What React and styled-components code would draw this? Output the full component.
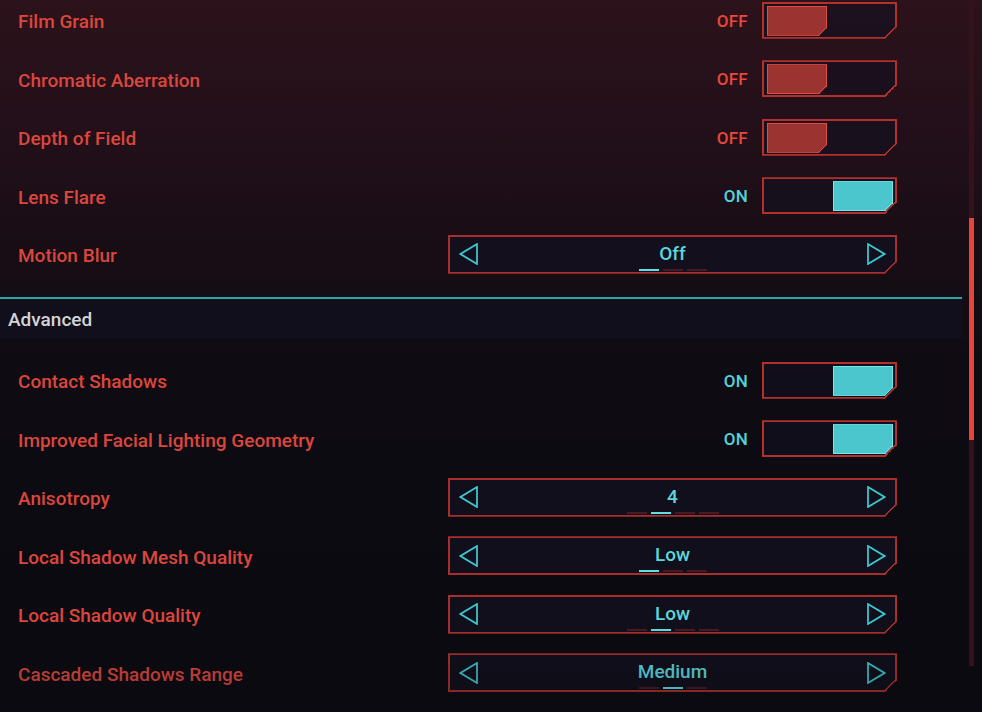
import React from "react";
import styled, { createGlobalStyle, css } from "styled-components";

const GlobalStyle = createGlobalStyle`
  *, *::before, *::after { box-sizing: border-box; }
  html, body { margin: 0; height: 100%; }
  body {
    background: linear-gradient(180deg, #2c121a 0%, #24101a 16%, #170d15 36%, #0e0b13 54%, #0a0a10 100%);
    font-family: Roboto, "Noto Sans", sans-serif;
    overflow: hidden;
  }
`;

// frame with a cut bottom-right corner; the diagonal edge is painted by ::after
const chamfer = (cut, color, width) => css`
  position: relative;
  border: ${width}px solid ${color};
  clip-path: polygon(0 0, 100% 0, 100% calc(100% - ${cut}px), calc(100% - ${cut}px) 100%, 0 100%);
  &::after {
    content: "";
    position: absolute;
    right: -${width}px;
    bottom: -${width}px;
    width: ${cut}px;
    height: ${cut}px;
    background: linear-gradient(
      to bottom right,
      transparent calc(50% - ${width}px),
      ${color} calc(50% - ${width}px),
      ${color} 50%,
      transparent 50%
    );
  }
`;

const Screen = styled.div`
  display: flex;
  height: 712px;
  overflow: hidden;
`;

const Panel = styled.div`
  position: relative;
  flex: 0 0 962px;
  display: flex;
  flex-direction: column;
  margin-top: -9px;
  &::after {
    content: "";
    position: absolute;
    left: 0;
    right: 0;
    top: 630px;
    height: 91px;
    pointer-events: none;
    background: linear-gradient(180deg, rgba(10, 10, 16, 0) 0%, rgba(10, 10, 16, 0.28) 100%);
  }
`;

const Row = styled.div`
  height: 58.5px;
  flex: none;
  display: flex;
  align-items: center;
  justify-content: space-between;
  padding: 0 65px 0 18px;
`;

const Label = styled.span`
  margin-top: 3px;
  font-size: 19px;
  font-weight: 500;
  color: #dc463c;
`;

const SectionHead = styled.div`
  flex: none;
  margin: 13.5px 0 12px;
  height: 42px;
  border-top: 2px solid #2fa3a6;
  background: #100f1b;
  display: flex;
  align-items: center;
  padding: 1px 0 0 8px;
  font-size: 19px;
  font-weight: 500;
  color: #d4d4d6;
`;

const ToggleGroup = styled.div`
  display: flex;
  align-items: center;
  gap: 14px;
`;

const State = styled.span`
  margin-top: 1px;
  font-size: 17px;
  font-weight: 500;
  letter-spacing: 0.3px;
  color: ${(p) => (p.$on ? "#55d2d8" : "#ea473d")};
`;

const Toggle = styled.div`
  ${chamfer(12, "#b3302d", 2)}
  width: 135px;
  height: 37px;
  padding: 2px 2px 1px 3px;
  display: flex;
  justify-content: ${(p) => (p.$on ? "flex-end" : "flex-start")};
  background: rgba(18, 16, 32, 0.6);
`;

const Knob = styled.div`
  ${(p) => (p.$on ? chamfer(8, "#70e8ee", 1) : chamfer(8, "#e24b3f", 1))}
  width: 60px;
  height: 100%;
  background: ${(p) => (p.$on ? "#4ac6cc" : "#9b3430")};
`;

const Selector = styled.div`
  ${chamfer(12, "#a92f2c", 2)}
  width: 449px;
  height: 39px;
  display: flex;
  align-items: center;
  padding: 0 9px;
  background: rgba(18, 17, 32, 0.7);
`;

const Value = styled.div`
  flex: 1;
  align-self: stretch;
  display: flex;
  flex-direction: column;
  align-items: center;
  padding-top: 7px;
`;

const ValueText = styled.span`
  font-size: 19px;
  font-weight: 500;
  line-height: 20px;
  color: #5cd6dc;
`;

const Dashes = styled.div`
  display: flex;
  gap: 4px;
  margin-top: 5px;
`;

const Dash = styled.span`
  width: 20px;
  height: 2px;
  background: ${(p) => (p.$active ? "#5ce0e6" : "#4a1a22")};
`;

const Track = styled.div`
  flex: none;
  margin-left: 7px;
  width: 5px;
  height: 666px;
  background: #35121a;
`;

const Thumb = styled.div`
  margin-top: 218px;
  height: 222px;
  background: #e8443a;
`;

const Arrow = ({ dir }) => (
  <svg width="20" height="22" viewBox="0 0 20 22" fill="none">
    <polygon
      points={dir === "left" ? "18,1 1.5,11 18,21" : "2,1 18.5,11 2,21"}
      stroke="#3cc6ce"
      strokeWidth="1.8"
    />
  </svg>
);

const ToggleRow = ({ label, on }) => (
  <Row>
    <Label>{label}</Label>
    <ToggleGroup>
      <State $on={on}>{on ? "ON" : "OFF"}</State>
      <Toggle $on={on}>
        <Knob $on={on} />
      </Toggle>
    </ToggleGroup>
  </Row>
);

const SelectRow = ({ label, value, steps, active }) => (
  <Row>
    <Label>{label}</Label>
    <Selector>
      <Arrow dir="left" />
      <Value>
        <ValueText>{value}</ValueText>
        <Dashes>
          {Array.from({ length: steps }).map((_, i) => (
            <Dash key={i} $active={i === active} />
          ))}
        </Dashes>
      </Value>
      <Arrow dir="right" />
    </Selector>
  </Row>
);

export default function App() {
  return (
    <>
      <GlobalStyle />
      <Screen>
        <Panel>
          <ToggleRow label="Film Grain" on={false} />
          <ToggleRow label="Chromatic Aberration" on={false} />
          <ToggleRow label="Depth of Field" on={false} />
          <ToggleRow label="Lens Flare" on />
          <SelectRow label="Motion Blur" value="Off" steps={3} active={0} />
          <SectionHead>Advanced</SectionHead>
          <ToggleRow label="Contact Shadows" on />
          <ToggleRow label="Improved Facial Lighting Geometry" on />
          <SelectRow label="Anisotropy" value="4" steps={4} active={1} />
          <SelectRow label="Local Shadow Mesh Quality" value="Low" steps={3} active={0} />
          <SelectRow label="Local Shadow Quality" value="Low" steps={4} active={1} />
          <SelectRow label="Cascaded Shadows Range" value="Medium" steps={3} active={1} />
        </Panel>
        <Track>
          <Thumb />
        </Track>
      </Screen>
    </>
  );
}
